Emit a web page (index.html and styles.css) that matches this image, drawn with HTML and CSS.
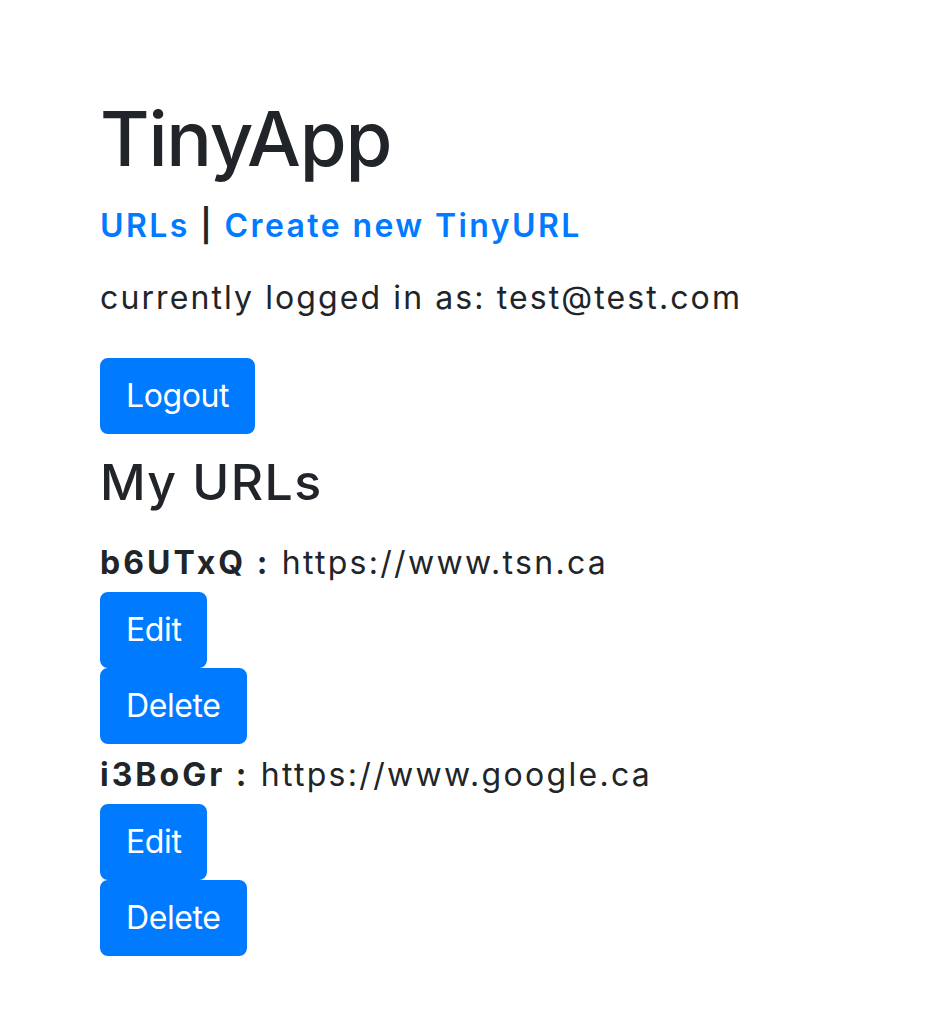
FILE: index.html
```html
<!DOCTYPE html>
<html>
<head>
<meta charset="utf-8">
<title>TinyApp</title>
<link rel="stylesheet" href="styles.css">
</head>
<body>
<main class="page">
  <header class="site-header">
    <h1 class="title">TinyApp</h1>
    <nav class="nav-links"><a href="#">URLs</a> | <a href="#">Create new TinyURL</a></nav>
    <p class="login-info">currently logged in as: test@test.com</p>
    <form class="logout-form"><button type="button" class="btn">Logout</button></form>
  </header>
  <h3 class="section-title">My URLs</h3>
  <div class="url-list">
    <div class="url-item">
      <div class="url-line"><strong>b6UTxQ :</strong> https://www.tsn.ca</div>
      <button type="button" class="btn">Edit</button>
      <button type="button" class="btn">Delete</button>
    </div>
    <div class="url-item">
      <div class="url-line"><strong>i3BoGr :</strong> https://www.google.ca</div>
      <button type="button" class="btn">Edit</button>
      <button type="button" class="btn">Delete</button>
    </div>
  </div>
</main>
</body>
</html>
```
FILE: styles.css
```css
html, body {
  margin: 0;
  padding: 0;
  background: #ffffff;
}
body {
  font-family: Inter, "Noto Sans", "Liberation Sans", sans-serif;
  color: #212529;
  font-size: 32px;
  line-height: 48px;
}
.page {
  padding: 92px 100px 0 100px;
}
.title {
  margin: 0;
  font-size: 76px;
  line-height: 92px;
  font-weight: 500;
  letter-spacing: -1.2px;
}
.nav-links {
  margin-top: 18px;
  height: 48px;
  font-weight: 600;
  letter-spacing: 2.4px;
}
.nav-links a {
  color: #007bff;
  text-decoration: none;
  font-weight: 600;
}
.login-info {
  margin: 24px 0 0 0;
  letter-spacing: 2.1px;
}
.logout-form {
  margin: 36px 0 0 0;
}
.btn {
  display: block;
  font-family: inherit;
  font-size: 32px;
  line-height: 48px;
  padding: 12px 24px;
  border: 2px solid #007bff;
  border-radius: 8px;
  background: #007bff;
  color: #ffffff;
  font-weight: 400;
  letter-spacing: -0.4px;
  cursor: pointer;
}
.section-title {
  margin: 18px 0 0 0;
  font-size: 50px;
  line-height: 60px;
  font-weight: 500;
  letter-spacing: 1.4px;
}
.url-line {
  margin-top: 27px;
  margin-bottom: 5px;
  letter-spacing: 2.3px;
}
.url-item + .url-item .url-line {
  margin-top: 7px;
}
.url-line strong {
  font-weight: 700;
  letter-spacing: 3px;
}
```
